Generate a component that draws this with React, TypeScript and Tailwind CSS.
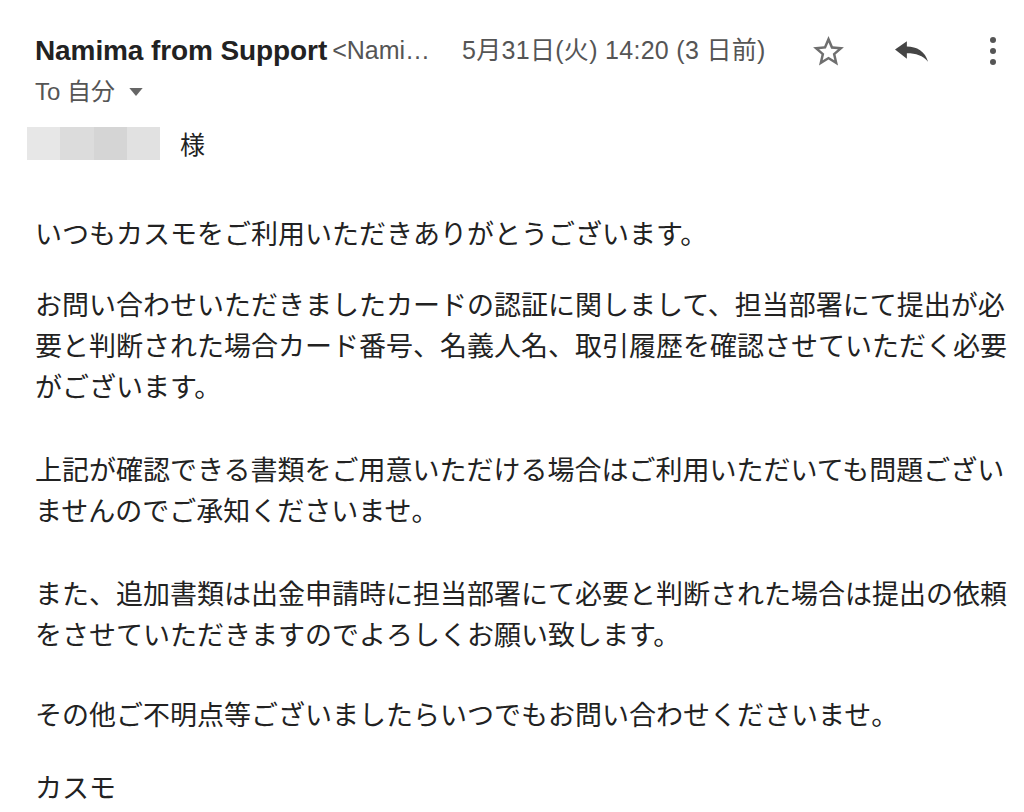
import React from "react";

const jp = { fontFamily: '"Noto Sans CJK JP", "Noto Sans", sans-serif' };
const head = { fontFamily: '"Liberation Sans", "Noto Sans CJK JP", sans-serif' };

function StarIcon() {
  return (
    <svg viewBox="0 0 24 24" className="w-[37px] h-[37px]" fill="#6f6f6f">
      <path d="M22 9.24l-7.19-.62L12 2 9.19 8.63 2 9.24l5.46 4.73L5.82 21 12 17.27 18.18 21l-1.63-7.03L22 9.24zM12 15.4l-3.76 2.27 1-4.28-3.32-2.88 4.38-.38L12 6.1l1.71 4.04 4.38.38-3.32 2.88 1 4.28L12 15.4z" />
    </svg>
  );
}

function ReplyIcon() {
  return (
    <svg viewBox="0 0 32 20" className="w-[33px] h-[21px]" fill="#454545">
      <path d="M0 8 L11.5 0 L11.5 5.2 C21 5.2 29.5 10 32 20 C27 14 20.5 11.8 11.5 11.8 L11.5 17 Z" />
    </svg>
  );
}

function MoreIcon() {
  return (
    <svg viewBox="0 0 8 30" className="w-[8px] h-[30px]" fill="#555">
      <circle cx="4" cy="4" r="3" />
      <circle cx="4" cy="15" r="3" />
      <circle cx="4" cy="26" r="3" />
    </svg>
  );
}

export default function App() {
  return (
    <div className="w-[1024px] h-[812px] bg-white overflow-hidden pl-[35px] text-[#222]">
      {/* header row */}
      <div className="flex items-center h-[40px] mt-[31px] pr-[11px]">
        <div className="w-[427px] flex items-center whitespace-nowrap overflow-hidden" style={head}>
          <span className="text-[28px] font-bold text-[#222] tracking-[-0.1px]">Namima from Support</span>
          <span className="ml-[5px] text-[25px] text-[#555]">&lt;Nami…</span>
        </div>
        <span className="text-[25px] text-[#555] whitespace-nowrap tracking-[0.3px]" style={head}>
          5月31日(火) 14:20 (3 日前)
        </span>
        <div className="ml-auto w-[40px] flex items-center justify-center">
          <StarIcon />
        </div>
        <div className="ml-[43px] w-[40px] flex items-center justify-center">
          <ReplyIcon />
        </div>
        <div className="ml-[42px] w-[40px] flex items-center justify-center">
          <MoreIcon />
        </div>
      </div>

      {/* To row */}
      <div className="flex items-center h-[30px] mt-[6px] text-[24px] text-[#555]" style={head}>
        <span>To 自分</span>
        <svg viewBox="0 0 10 6" className="w-[14px] h-[8px] ml-[14px]" fill="#666">
          <path d="M0 0h10L5 6z" />
        </svg>
      </div>

      {/* recipient row */}
      <div className="flex items-center h-[33px] mt-[20px] -ml-[8px]">
        <div className="flex h-[33px]">
          <div className="w-[33px] bg-[#e7e7e7]" />
          <div className="w-[34px] bg-[#dcdcdc]" />
          <div className="w-[33px] bg-[#d5d5d5]" />
          <div className="w-[33px] bg-[#e1e1e1]" />
        </div>
        <span className="ml-[20px] text-[25px]" style={jp}>様</span>
      </div>

      {/* body */}
      <div className="text-[27px] leading-[41px] whitespace-nowrap mt-[52px]" style={jp}>
        <p>いつもカスモをご利用いただきありがとうございます。</p>
        <p className="mt-[30px]">
          お問い合わせいただきましたカードの認証に関しまして、担当部署にて提出が必
          <br />
          要と判断された場合カード番号、名義人名、取引履歴を確認させていただく必要
          <br />
          がございます。
        </p>
        <p className="mt-[42px]">
          上記が確認できる書類をご用意いただける場合はご利用いただいても問題ござい
          <br />
          ませんのでご承知くださいませ。
        </p>
        <p className="mt-[42px]">
          また、追加書類は出金申請時に担当部署にて必要と判断された場合は提出の依頼
          <br />
          をさせていただきますのでよろしくお願い致します。
        </p>
        <p className="mt-[39px]">その他ご不明点等ございましたらいつでもお問い合わせくださいませ。</p>
        <p className="mt-[32px]">カスモ</p>
      </div>
    </div>
  );
}
